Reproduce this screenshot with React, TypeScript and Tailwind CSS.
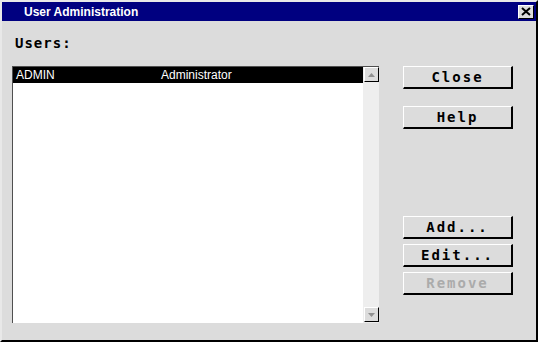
import { ReactNode } from "react";

const mono = { fontFamily: '"DejaVu Sans Mono", "Liberation Mono", monospace' };
const sans = { fontFamily: '"Liberation Sans", Arial, sans-serif' };

function ArrowButton({ down }: { down?: boolean }) {
  return (
    <div className="w-[15px] h-[15px] bg-[#dcdcdc] border-t border-l border-t-white border-l-white border-b border-r border-b-black border-r-black flex items-center justify-center">
      <svg width="7" height="4" viewBox="0 0 7 4">
        {down ? <polygon points="0,0 7,0 3.5,4" fill="#909090" /> : <polygon points="0,4 7,4 3.5,0" fill="#909090" />}
      </svg>
    </div>
  );
}

function Button({ children, disabled }: { children: ReactNode; disabled?: boolean }) {
  return (
    <button
      className={`w-[110px] h-[23px] bg-[#dcdcdc] border-t border-l border-t-white border-l-white border-b-2 border-r-2 border-b-black border-r-black flex items-center justify-center text-[14px] font-bold tracking-[2px] leading-none ${
        disabled ? "text-[#ababab]" : "text-black"
      }`}
      style={mono}
    >
      {children}
    </button>
  );
}

export default function App() {
  return (
    <div className="w-[538px] h-[342px] bg-[#dcdcdc] border-t-2 border-l-2 border-t-[#e8e8e8] border-l-[#e8e8e8] border-b-2 border-r-2 border-b-black border-r-black flex flex-col">
      {/* title bar */}
      <div className="h-[19px] bg-[#000080] flex items-center justify-between pl-[22px] pr-[2px]">
        <span className="text-white text-[12px] font-bold" style={sans}>
          User Administration
        </span>
        <div className="w-[16px] h-[14px] bg-[#dcdcdc] border-t border-l border-t-white border-l-white border-b border-r border-b-black border-r-black flex items-center justify-center">
          <svg width="10" height="9" viewBox="0 0 10 9">
            <path d="M1 1 L9 8 M9 1 L1 8" stroke="black" strokeWidth="2" />
          </svg>
        </div>
      </div>

      {/* body */}
      <div className="flex flex-col pl-[10px] pt-[14px]">
        <div className="h-[16px] leading-[16px] pl-[3px] text-[14px] font-bold tracking-[1px] text-black" style={mono}>
          Users:
        </div>

        <div className="flex mt-[15px]">
          {/* list */}
          <div className="w-[367px] h-[257px] flex border-t border-l border-t-[#505050] border-l-[#505050] bg-white">
            <div className="flex-1">
              <div className="h-[16px] bg-black text-white text-[12px] flex items-center pl-[3px]" style={sans}>
                <span className="w-[145px]">ADMIN</span>
                <span>Administrator</span>
              </div>
            </div>
            <div className="w-[16px] bg-[#eeeeee] flex flex-col justify-between pl-px pb-[1px]">
              <ArrowButton />
              <ArrowButton down />
            </div>
          </div>

          {/* buttons */}
          <div className="flex flex-col ml-[24px]">
            <Button>Close</Button>
            <div className="mt-[17px]">
              <Button>Help</Button>
            </div>
            <div className="mt-[87px] flex flex-col gap-[5px]">
              <Button>Add...</Button>
              <Button>Edit...</Button>
              <Button disabled>Remove</Button>
            </div>
          </div>
        </div>
      </div>
    </div>
  );
}
